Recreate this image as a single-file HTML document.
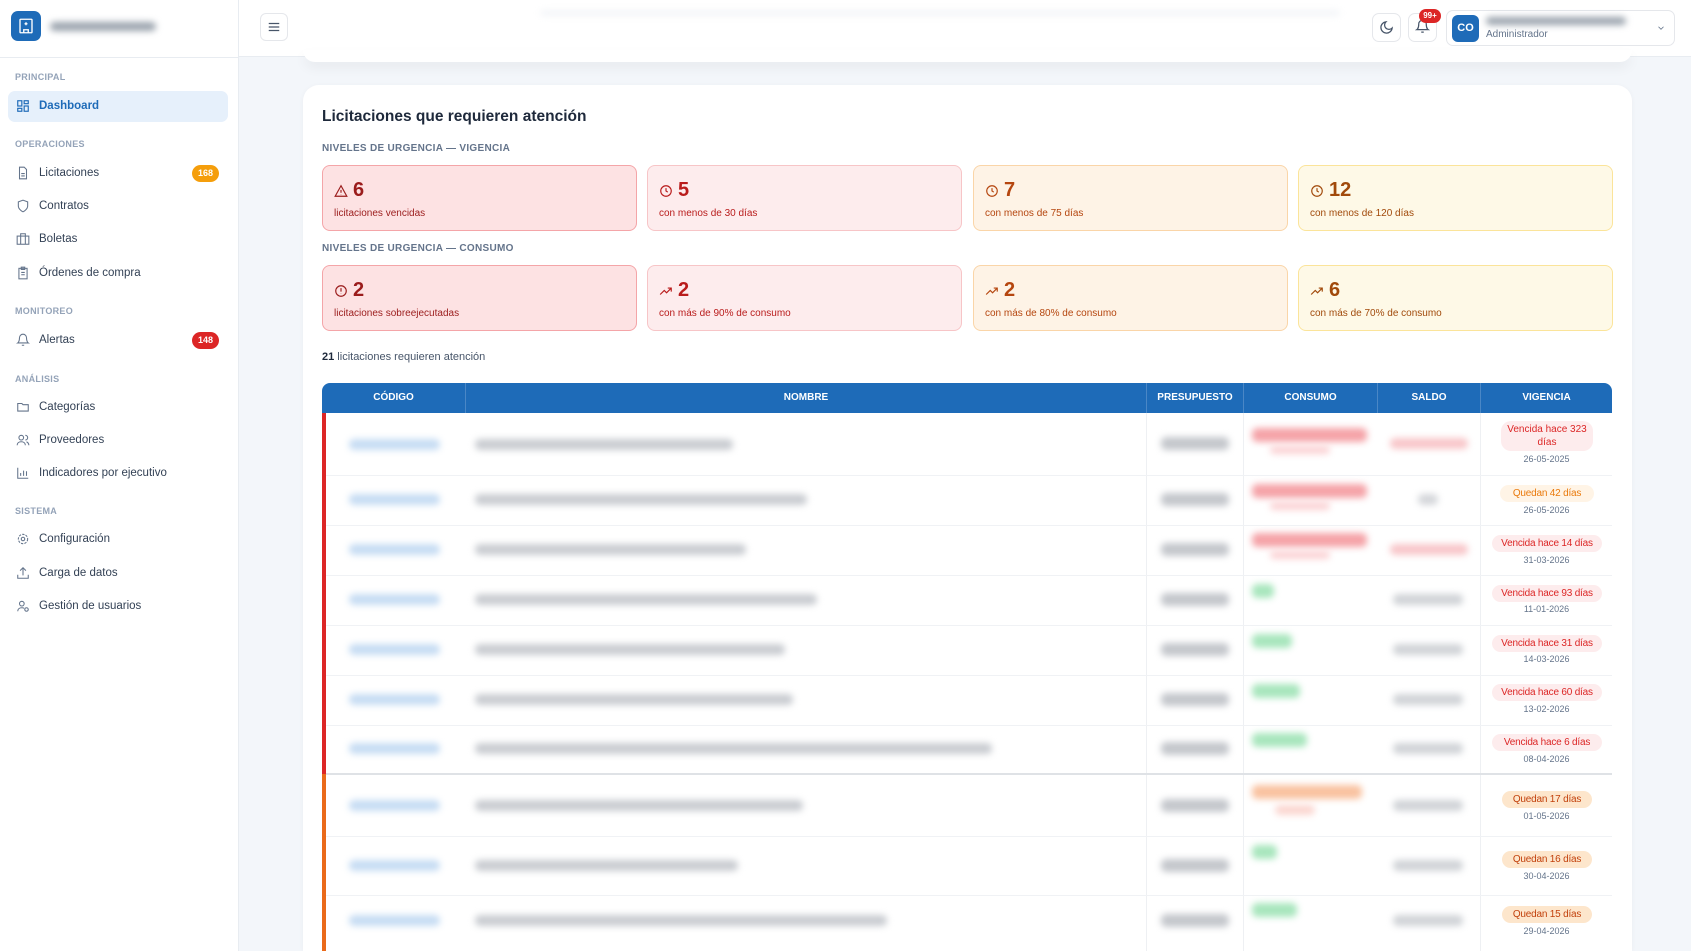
<!DOCTYPE html>
<html><head><meta charset="utf-8"><style>
*{box-sizing:border-box;margin:0;padding:0}
html,body{width:1691px;height:951px;overflow:hidden}
body{background:#f3f6fa;font-family:"Liberation Sans",sans-serif;position:relative;color:#1e293b}
.a{position:absolute}
.side{left:0;top:0;width:239px;height:951px;background:#fff;border-right:1px solid #e8ecf1}
.hdr{left:239px;top:0;width:1452px;height:57px;background:#fff;border-bottom:1px solid #e8ecf1}
.sec{left:15px;font-size:9px;color:#94a3b8;font-weight:bold;letter-spacing:.3px}
.nav{left:39px;font-size:11.5px;color:#334155}
.ic{left:16px;width:14px;height:14px}
.badge{left:192px;width:27px;height:17px;border-radius:9px;color:#fff;font-size:9px;font-weight:bold;text-align:center;line-height:17px}
.blur{filter:blur(3.5px);border-radius:5px}
.card{height:66px;width:315px;border-radius:8px;border:1px solid}
.card .n{position:absolute;left:30px;top:13px;font-size:20px;font-weight:bold}
.card .t{position:absolute;left:11px;top:42px;font-size:10px}
.card svg{position:absolute;left:11px;top:18px}
.th{top:383px;height:30px;color:#fff;font-size:10px;font-weight:bold;text-align:center;line-height:30px}
.vb{font-size:10px;border-radius:10px;text-align:center;padding:3px 4px;white-space:nowrap;letter-spacing:-.2px}
.dt{font-size:9px;color:#64748b;text-align:center;width:133px;left:1480px}
</style></head><body>
<div class="a side"></div>
<div class="a" style="left:11px;top:11px;width:30px;height:30px;background:#1e6bb8;border-radius:7px"></div>
<svg class="a" style="left:17px;top:17px" width="18" height="18" viewBox="0 0 24 24" fill="none" stroke="#fff" stroke-width="1.8"><rect x="4" y="3" width="16" height="18" rx="1"/><path d="M12 7v4M10 9h4M9 21v-4h6v4"/></svg>
<div class="a blur" style="left:50px;top:22px;width:106px;height:9px;background:#9aa3ad"></div>
<div class="a" style="left:0;top:57px;width:239px;height:1px;background:#e8ecf1"></div>

<div class="a sec" style="top:72px">PRINCIPAL</div>
<div class="a" style="left:8px;top:91px;width:220px;height:31px;background:#e6f0fb;border-radius:7px"></div>
<svg class="a ic" style="top:99px" viewBox="0 0 24 24" fill="none" stroke="#1e6bb8" stroke-width="2"><rect x="3" y="3" width="7" height="9"/><rect x="14" y="3" width="7" height="5"/><rect x="14" y="12" width="7" height="9"/><rect x="3" y="16" width="7" height="5"/></svg>
<div class="a nav" style="top:100px;color:#1e6bb8;font-weight:bold">Dashboard</div>

<div class="a sec" style="top:139px">OPERACIONES</div>
<svg class="a ic" style="top:166px" viewBox="0 0 24 24" fill="none" stroke="#64748b" stroke-width="1.8"><path d="M14 2H6v20h12V6z"/><path d="M9 13h6M9 17h6"/></svg>
<div class="a nav" style="top:167px">Licitaciones</div>
<div class="a badge" style="top:165px;background:#f59e0b">168</div>
<svg class="a ic" style="top:199px" viewBox="0 0 24 24" fill="none" stroke="#64748b" stroke-width="1.8"><path d="M12 22s8-4 8-10V5l-8-3-8 3v7c0 6 8 10 8 10z"/></svg>
<div class="a nav" style="top:200px">Contratos</div>
<svg class="a ic" style="top:232px" viewBox="0 0 24 24" fill="none" stroke="#64748b" stroke-width="1.8"><rect x="2" y="7" width="20" height="14"/><path d="M16 21V3H8v18"/></svg>
<div class="a nav" style="top:233px">Boletas</div>
<svg class="a ic" style="top:266px" viewBox="0 0 24 24" fill="none" stroke="#64748b" stroke-width="1.8"><rect x="5" y="4" width="14" height="18"/><path d="M9 2h6v4H9zM9 11h6M9 15h6"/></svg>
<div class="a nav" style="top:267px">Órdenes de compra</div>

<div class="a sec" style="top:306px">MONITOREO</div>
<svg class="a ic" style="top:333px" viewBox="0 0 24 24" fill="none" stroke="#64748b" stroke-width="1.8"><path d="M6 8a6 6 0 0112 0c0 7 3 9 3 9H3s3-2 3-9M10 21h4"/></svg>
<div class="a nav" style="top:334px">Alertas</div>
<div class="a badge" style="top:332px;background:#dc2626">148</div>

<div class="a sec" style="top:374px">ANÁLISIS</div>
<svg class="a ic" style="top:400px" viewBox="0 0 24 24" fill="none" stroke="#64748b" stroke-width="1.8"><path d="M3 6h7l2 2h9v11H3z"/></svg>
<div class="a nav" style="top:401px">Categorías</div>
<svg class="a ic" style="top:433px" viewBox="0 0 24 24" fill="none" stroke="#64748b" stroke-width="1.8"><circle cx="9" cy="8" r="4"/><path d="M2 21c0-4 3-6 7-6s7 2 7 6M16 4a4 4 0 010 8M22 21c0-3-2-5-4-6"/></svg>
<div class="a nav" style="top:434px">Proveedores</div>
<svg class="a ic" style="top:466px" viewBox="0 0 24 24" fill="none" stroke="#64748b" stroke-width="1.8"><path d="M3 3v18h18M8 17v-5M13 17V8M18 17v-8"/></svg>
<div class="a nav" style="top:467px">Indicadores por ejecutivo</div>

<div class="a sec" style="top:506px">SISTEMA</div>
<svg class="a ic" style="top:532px" viewBox="0 0 24 24" fill="none" stroke="#64748b" stroke-width="1.8"><circle cx="12" cy="12" r="3"/><circle cx="12" cy="12" r="8" stroke-dasharray="4 2"/></svg>
<div class="a nav" style="top:533px">Configuración</div>
<svg class="a ic" style="top:566px" viewBox="0 0 24 24" fill="none" stroke="#64748b" stroke-width="1.8"><path d="M3 15v6h18v-6M12 16V3M7 8l5-5 5 5"/></svg>
<div class="a nav" style="top:567px">Carga de datos</div>
<svg class="a ic" style="top:599px" viewBox="0 0 24 24" fill="none" stroke="#64748b" stroke-width="1.8"><circle cx="10" cy="8" r="4"/><path d="M3 21c0-4 3-6 7-6 2 0 3 .3 4 1"/><circle cx="18" cy="18" r="3"/></svg>
<div class="a nav" style="top:600px">Gestión de usuarios</div>

<div class="a hdr"></div>
<div class="a" style="left:260px;top:13px;width:28px;height:28px;border:1px solid #e5e7eb;border-radius:6px"></div>
<svg class="a" style="left:267px;top:20px" width="14" height="14" viewBox="0 0 24 24" stroke="#475569" stroke-width="2"><path d="M3 6h18M3 12h18M3 18h18"/></svg>
<div class="a blur" style="left:540px;top:10px;width:800px;height:6px;background:#f3f5f8"></div>
<div class="a" style="left:1372px;top:13px;width:29px;height:29px;border:1px solid #e5e7eb;border-radius:7px"></div>
<svg class="a" style="left:1379px;top:20px" width="15" height="15" viewBox="0 0 24 24" fill="none" stroke="#475569" stroke-width="2"><path d="M21 13A9 9 0 1111 3a7 7 0 0010 10z"/></svg>
<div class="a" style="left:1408px;top:13px;width:29px;height:29px;border:1px solid #e5e7eb;border-radius:7px"></div>
<svg class="a" style="left:1415px;top:19px" width="15" height="15" viewBox="0 0 24 24" fill="none" stroke="#475569" stroke-width="2"><path d="M6 8a6 6 0 0112 0c0 7 3 9 3 9H3s3-2 3-9M10 21h4"/></svg>
<div class="a" style="left:1419px;top:9px;width:22px;height:14px;background:#dc2626;border-radius:7px;color:#fff;font-size:8px;font-weight:bold;text-align:center;line-height:14px">99+</div>
<div class="a" style="left:1446px;top:10px;width:229px;height:36px;border:1px solid #e5e7eb;border-radius:7px"></div>
<div class="a" style="left:1452px;top:15px;width:27px;height:27px;background:#1e6bb8;border-radius:6px;color:#fff;font-size:11px;font-weight:bold;text-align:center;line-height:27px">CO</div>
<div class="a blur" style="left:1486px;top:17px;width:140px;height:8px;background:#9aa3ad"></div>
<div class="a" style="left:1486px;top:29px;font-size:10px;color:#64748b">Administrador</div>
<svg class="a" style="left:1656px;top:23px" width="10" height="10" viewBox="0 0 24 24" fill="none" stroke="#64748b" stroke-width="2"><path d="M6 9l6 6 6-6"/></svg>

<div class="a" style="left:303px;top:50px;width:1329px;height:12px;background:#fff;border-radius:0 0 14px 14px;box-shadow:0 6px 12px rgba(0,0,0,.05)"></div>

<div class="a" style="left:303px;top:85px;width:1329px;height:866px;background:#fff;border-radius:16px 16px 0 0;box-shadow:0 1px 6px rgba(0,0,0,.04)"></div>
<div class="a" style="left:322px;top:108px;font-size:15.5px;font-weight:bold;color:#1e293b">Licitaciones que requieren atención</div>
<div class="a" style="left:322px;top:143px;font-size:10px;font-weight:bold;color:#64748b;letter-spacing:.3px">NIVELES DE URGENCIA — VIGENCIA</div>
<div class="a" style="left:322px;top:243px;font-size:10px;font-weight:bold;color:#64748b;letter-spacing:.3px">NIVELES DE URGENCIA — CONSUMO</div>

<div class="a card" style="left:322px;top:165px;background:#fde2e3;border-color:#f4a5a8;color:#9b1c1c"><svg width="14" height="14" viewBox="0 0 24 24" fill="none" stroke="#9b1c1c" stroke-width="2"><path d="M12 3L2 21h20zM12 10v5M12 18v.5"/></svg><div class="n">6</div><div class="t">licitaciones vencidas</div></div>
<div class="a card" style="left:647px;top:165px;background:#fdeced;border-color:#f7c5c7;color:#b91c1c"><svg width="14" height="14" viewBox="0 0 24 24" fill="none" stroke="#b91c1c" stroke-width="2"><circle cx="12" cy="12" r="9"/><path d="M12 7v5l3 2"/></svg><div class="n">5</div><div class="t">con menos de 30 días</div></div>
<div class="a card" style="left:973px;top:165px;background:#fef3e6;border-color:#fad5a8;color:#b5460f"><svg width="14" height="14" viewBox="0 0 24 24" fill="none" stroke="#b5460f" stroke-width="2"><circle cx="12" cy="12" r="9"/><path d="M12 7v5l3 2"/></svg><div class="n">7</div><div class="t">con menos de 75 días</div></div>
<div class="a card" style="left:1298px;top:165px;background:#fef9e7;border-color:#fbe49a;color:#a14a0b"><svg width="14" height="14" viewBox="0 0 24 24" fill="none" stroke="#a14a0b" stroke-width="2"><circle cx="12" cy="12" r="9"/><path d="M12 7v5l3 2"/></svg><div class="n">12</div><div class="t">con menos de 120 días</div></div>

<div class="a card" style="left:322px;top:265px;background:#fde2e3;border-color:#f4a5a8;color:#9b1c1c"><svg width="14" height="14" viewBox="0 0 24 24" fill="none" stroke="#9b1c1c" stroke-width="2"><circle cx="12" cy="12" r="9"/><path d="M12 7v6M12 16v.5"/></svg><div class="n">2</div><div class="t">licitaciones sobreejecutadas</div></div>
<div class="a card" style="left:647px;top:265px;background:#fdeced;border-color:#f7c5c7;color:#b91c1c"><svg width="14" height="14" viewBox="0 0 24 24" fill="none" stroke="#b91c1c" stroke-width="2"><path d="M2 18l7-7 4 4 8-8M15 7h6v6"/></svg><div class="n">2</div><div class="t">con más de 90% de consumo</div></div>
<div class="a card" style="left:973px;top:265px;background:#fef3e6;border-color:#fad5a8;color:#b5460f"><svg width="14" height="14" viewBox="0 0 24 24" fill="none" stroke="#b5460f" stroke-width="2"><path d="M2 18l7-7 4 4 8-8M15 7h6v6"/></svg><div class="n">2</div><div class="t">con más de 80% de consumo</div></div>
<div class="a card" style="left:1298px;top:265px;background:#fef9e7;border-color:#fbe49a;color:#a14a0b"><svg width="14" height="14" viewBox="0 0 24 24" fill="none" stroke="#a14a0b" stroke-width="2"><path d="M2 18l7-7 4 4 8-8M15 7h6v6"/></svg><div class="n">6</div><div class="t">con más de 70% de consumo</div></div>

<div class="a" style="left:322px;top:351px;font-size:11px;color:#475569"><b style="color:#1e293b">21</b> licitaciones requieren atención</div>

<div class="a" style="left:322px;top:383px;width:1290px;height:30px;background:#1e6bb8;border-radius:8px 8px 0 0"></div>
<div class="a th" style="left:322px;width:143px">CÓDIGO</div>
<div class="a th" style="left:465px;width:681px;border-left:1px solid #4a87c6">NOMBRE</div>
<div class="a th" style="left:1146px;width:97px;border-left:1px solid #4a87c6">PRESUPUESTO</div>
<div class="a th" style="left:1243px;width:134px;border-left:1px solid #4a87c6">CONSUMO</div>
<div class="a th" style="left:1377px;width:103px;border-left:1px solid #4a87c6">SALDO</div>
<div class="a th" style="left:1480px;width:132px;border-left:1px solid #4a87c6">VIGENCIA</div>

<div class="a" style="left:1146px;top:413px;width:1px;height:540px;background:#eef0f3"></div>
<div class="a" style="left:1243px;top:413px;width:1px;height:540px;background:#eef0f3"></div>
<div class="a" style="left:1480px;top:413px;width:1px;height:540px;background:#eef0f3"></div>

<div class="a" style="left:322px;top:413px;width:4px;height:361px;background:#dc2626"></div>
<div class="a" style="left:322px;top:774px;width:4px;height:180px;background:#ea6a1a"></div>
<div class="a" style="left:326px;top:475px;width:1286px;height:1px;background:#f0f2f5"></div>
<div class="a" style="left:326px;top:525px;width:1286px;height:1px;background:#f0f2f5"></div>
<div class="a" style="left:326px;top:575px;width:1286px;height:1px;background:#f0f2f5"></div>
<div class="a" style="left:326px;top:625px;width:1286px;height:1px;background:#f0f2f5"></div>
<div class="a" style="left:326px;top:675px;width:1286px;height:1px;background:#f0f2f5"></div>
<div class="a" style="left:326px;top:725px;width:1286px;height:1px;background:#f0f2f5"></div>
<div class="a" style="left:326px;top:773px;width:1286px;height:2px;background:#dfe2e6"></div>
<div class="a" style="left:326px;top:836px;width:1286px;height:1px;background:#f0f2f5"></div>
<div class="a" style="left:326px;top:895px;width:1286px;height:1px;background:#f0f2f5"></div>

<div class="a blur" style="left:349px;top:439px;width:91px;height:11px;background:#c6dcf3"></div>
<div class="a blur" style="left:349px;top:494px;width:91px;height:11px;background:#c6dcf3"></div>
<div class="a blur" style="left:349px;top:544px;width:91px;height:11px;background:#c6dcf3"></div>
<div class="a blur" style="left:349px;top:594px;width:91px;height:11px;background:#c6dcf3"></div>
<div class="a blur" style="left:349px;top:644px;width:91px;height:11px;background:#c6dcf3"></div>
<div class="a blur" style="left:349px;top:694px;width:91px;height:11px;background:#c6dcf3"></div>
<div class="a blur" style="left:349px;top:743px;width:91px;height:11px;background:#c6dcf3"></div>
<div class="a blur" style="left:349px;top:800px;width:91px;height:11px;background:#c6dcf3"></div>
<div class="a blur" style="left:349px;top:860px;width:91px;height:11px;background:#c6dcf3"></div>
<div class="a blur" style="left:349px;top:915px;width:91px;height:11px;background:#c6dcf3"></div>

<div class="a blur" style="left:475px;top:439px;width:258px;height:11px;background:#c9ccd1"></div>
<div class="a blur" style="left:475px;top:494px;width:332px;height:11px;background:#c9ccd1"></div>
<div class="a blur" style="left:475px;top:544px;width:271px;height:11px;background:#c9ccd1"></div>
<div class="a blur" style="left:475px;top:594px;width:342px;height:11px;background:#c9ccd1"></div>
<div class="a blur" style="left:475px;top:644px;width:310px;height:11px;background:#c9ccd1"></div>
<div class="a blur" style="left:475px;top:694px;width:318px;height:11px;background:#c9ccd1"></div>
<div class="a blur" style="left:475px;top:743px;width:517px;height:11px;background:#c9ccd1"></div>
<div class="a blur" style="left:475px;top:800px;width:328px;height:11px;background:#c9ccd1"></div>
<div class="a blur" style="left:475px;top:860px;width:263px;height:11px;background:#c9ccd1"></div>
<div class="a blur" style="left:475px;top:915px;width:412px;height:11px;background:#c9ccd1"></div>

<div class="a blur" style="left:1161px;top:437px;width:68px;height:13px;background:#c4c7cc"></div>
<div class="a blur" style="left:1161px;top:493px;width:68px;height:13px;background:#c4c7cc"></div>
<div class="a blur" style="left:1161px;top:543px;width:68px;height:13px;background:#c4c7cc"></div>
<div class="a blur" style="left:1161px;top:593px;width:68px;height:13px;background:#c4c7cc"></div>
<div class="a blur" style="left:1161px;top:643px;width:68px;height:13px;background:#c4c7cc"></div>
<div class="a blur" style="left:1161px;top:693px;width:68px;height:13px;background:#c4c7cc"></div>
<div class="a blur" style="left:1161px;top:742px;width:68px;height:13px;background:#c4c7cc"></div>
<div class="a blur" style="left:1161px;top:799px;width:68px;height:13px;background:#c4c7cc"></div>
<div class="a blur" style="left:1161px;top:859px;width:68px;height:13px;background:#c4c7cc"></div>
<div class="a blur" style="left:1161px;top:914px;width:68px;height:13px;background:#c4c7cc"></div>

<div class="a blur" style="left:1252px;top:428px;width:115px;height:14px;background:#f5a3a8"></div>
<div class="a blur" style="left:1270px;top:446px;width:60px;height:8px;background:#fbd2d4"></div>
<div class="a blur" style="left:1252px;top:484px;width:115px;height:14px;background:#f5a3a8"></div>
<div class="a blur" style="left:1270px;top:502px;width:60px;height:8px;background:#fbd2d4"></div>
<div class="a blur" style="left:1252px;top:533px;width:115px;height:14px;background:#f5a3a8"></div>
<div class="a blur" style="left:1270px;top:551px;width:60px;height:8px;background:#fbd2d4"></div>
<div class="a blur" style="left:1252px;top:584px;width:22px;height:14px;background:#a8e6bd"></div>
<div class="a blur" style="left:1252px;top:634px;width:40px;height:14px;background:#a8e6bd"></div>
<div class="a blur" style="left:1252px;top:684px;width:48px;height:14px;background:#a8e6bd"></div>
<div class="a blur" style="left:1252px;top:733px;width:55px;height:14px;background:#a8e6bd"></div>
<div class="a blur" style="left:1252px;top:785px;width:110px;height:14px;background:#f9c2a0"></div>
<div class="a blur" style="left:1275px;top:805px;width:40px;height:10px;background:#fbd6d0"></div>
<div class="a blur" style="left:1252px;top:845px;width:25px;height:14px;background:#a8e6bd"></div>
<div class="a blur" style="left:1252px;top:903px;width:45px;height:14px;background:#a8e6bd"></div>

<div class="a blur" style="left:1390px;top:438px;width:78px;height:11px;background:#f8c6c9"></div>
<div class="a blur" style="left:1418px;top:494px;width:20px;height:11px;background:#d4d6da"></div>
<div class="a blur" style="left:1390px;top:544px;width:78px;height:11px;background:#f8c6c9"></div>
<div class="a blur" style="left:1393px;top:594px;width:70px;height:11px;background:#d0d3d7"></div>
<div class="a blur" style="left:1393px;top:644px;width:70px;height:11px;background:#d0d3d7"></div>
<div class="a blur" style="left:1393px;top:694px;width:70px;height:11px;background:#d0d3d7"></div>
<div class="a blur" style="left:1393px;top:743px;width:70px;height:11px;background:#d0d3d7"></div>
<div class="a blur" style="left:1393px;top:800px;width:70px;height:11px;background:#d0d3d7"></div>
<div class="a blur" style="left:1393px;top:860px;width:70px;height:11px;background:#d0d3d7"></div>
<div class="a blur" style="left:1393px;top:915px;width:70px;height:11px;background:#d0d3d7"></div>

<div class="a" style="left:1501px;top:421px;width:92px;height:30px;background:#fdeced;color:#dc2626;border-radius:10px;font-size:10px;line-height:13px;text-align:center;padding:2px 4px">Vencida hace 323 días</div>
<div class="a dt" style="top:454px">26-05-2025</div>
<div class="a vb" style="left:1500px;top:485px;width:94px;background:#fff4e6;color:#ea7a0c">Quedan 42 días</div>
<div class="a dt" style="top:505px">26-05-2026</div>
<div class="a vb" style="left:1492px;top:535px;width:110px;background:#fdeced;color:#dc2626">Vencida hace 14 días</div>
<div class="a dt" style="top:555px">31-03-2026</div>
<div class="a vb" style="left:1492px;top:585px;width:110px;background:#fdeced;color:#dc2626">Vencida hace 93 días</div>
<div class="a dt" style="top:604px">11-01-2026</div>
<div class="a vb" style="left:1492px;top:635px;width:110px;background:#fdeced;color:#dc2626">Vencida hace 31 días</div>
<div class="a dt" style="top:654px">14-03-2026</div>
<div class="a vb" style="left:1492px;top:684px;width:110px;background:#fdeced;color:#dc2626">Vencida hace 60 días</div>
<div class="a dt" style="top:704px">13-02-2026</div>
<div class="a vb" style="left:1492px;top:734px;width:110px;background:#fdeced;color:#dc2626">Vencida hace 6 días</div>
<div class="a dt" style="top:754px">08-04-2026</div>
<div class="a vb" style="left:1502px;top:791px;width:90px;background:#fde6cc;color:#c2410c">Quedan 17 días</div>
<div class="a dt" style="top:811px">01-05-2026</div>
<div class="a vb" style="left:1502px;top:851px;width:90px;background:#fde6cc;color:#c2410c">Quedan 16 días</div>
<div class="a dt" style="top:871px">30-04-2026</div>
<div class="a vb" style="left:1502px;top:906px;width:90px;background:#fde6cc;color:#c2410c">Quedan 15 días</div>
<div class="a dt" style="top:926px">29-04-2026</div>
</body></html>
